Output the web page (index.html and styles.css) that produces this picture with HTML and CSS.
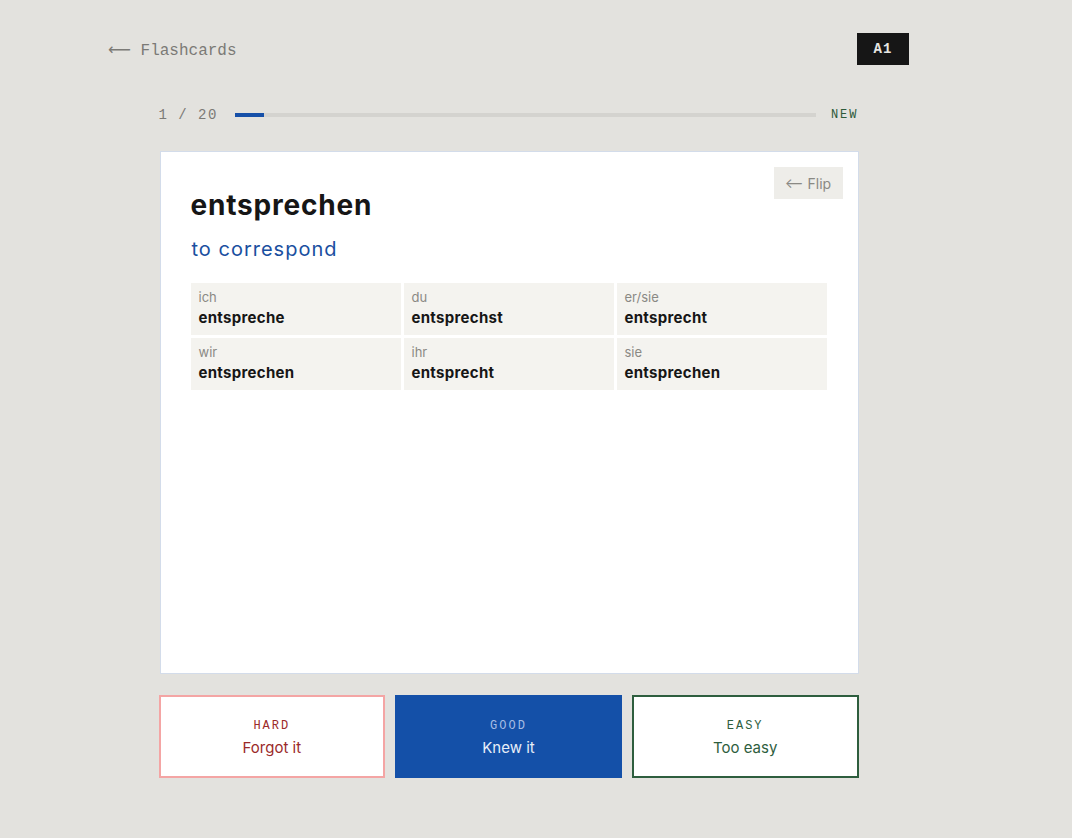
FILE: index.html
```html
<!DOCTYPE html>
<html lang="en">
<head>
    <meta charset="UTF-8">
    <meta name="viewport" content="width=device-width, initial-scale=1.0">
    <title>Flashcards</title>
    <link rel="stylesheet" href="styles.css">
</head>
<body>
    <div class="page">
        <header class="topbar">
            <a class="back" href="#"><span class="back-arrow">&#10229;</span> Flashcards</a>
            <span class="level">A1</span>
        </header>

        <main class="session">
            <div class="progress">
                <span class="count">1 / 20</span>
                <div class="track"><div class="fill" style="width: 5%;"></div></div>
                <span class="state">NEW</span>
            </div>

            <div class="card">
                <button class="flip">&#10229; Flip</button>
                <h1 class="word">entsprechen</h1>
                <p class="meaning">to correspond</p>

                <div class="conj">
                    <div class="cell"><span class="pron">ich</span><span class="form">entspreche</span></div>
                    <div class="cell"><span class="pron">du</span><span class="form">entsprechst</span></div>
                    <div class="cell"><span class="pron">er/sie</span><span class="form">entsprecht</span></div>
                    <div class="cell"><span class="pron">wir</span><span class="form">entsprechen</span></div>
                    <div class="cell"><span class="pron">ihr</span><span class="form">entsprecht</span></div>
                    <div class="cell"><span class="pron">sie</span><span class="form">entsprechen</span></div>
                </div>
            </div>

            <div class="grades">
                <button class="grade hard"><span class="tag">HARD</span><span class="desc">Forgot it</span></button>
                <button class="grade good"><span class="tag">GOOD</span><span class="desc">Knew it</span></button>
                <button class="grade easy"><span class="tag">EASY</span><span class="desc">Too easy</span></button>
            </div>
        </main>
    </div>
</body>
</html>
```

FILE: styles.css
```css
body {
    margin: 0;
    background-color: #e3e2de;
    font-family: Inter, "Noto Sans", sans-serif;
    color: #161616;
}
.page {
    width: 801px;
    margin-left: 108px;
    padding-top: 33px;
}
.topbar {
    display: flex;
    justify-content: space-between;
    align-items: center;
    height: 32px;
}
.back {
    font-family: "Liberation Mono", "DejaVu Sans Mono", monospace;
    font-size: 16px;
    color: #7b7a76;
    text-decoration: none;
    padding-top: 2px;
}
.back-arrow {
    font-family: "DejaVu Sans", sans-serif;
    font-size: 16px;
}
.level {
    display: flex;
    align-items: center;
    justify-content: center;
    width: 52px;
    height: 32px;
    background: #161616;
    color: #e6e6e2;
    font-family: "Liberation Mono", monospace;
    font-weight: bold;
    font-size: 14px;
    letter-spacing: 1px;
}
.session {
    width: 700px;
    margin: 0 auto;
    padding-top: 40px;
}
.progress {
    display: flex;
    align-items: center;
    height: 20px;
    font-family: "Liberation Mono", monospace;
}
.count {
    font-size: 14px;
    letter-spacing: 1.5px;
    color: #7b7a76;
    width: 76px;
}
.track {
    flex: 1;
    height: 4px;
    background: #d4d3cf;
}
.fill {
    height: 100%;
    background: #1650a8;
}
.state {
    margin-left: 15px;
    font-size: 12px;
    letter-spacing: 2px;
    color: #2d5a3a;
}
.card {
    position: relative;
    margin-top: 26px;
    margin-left: 1px;
    width: 699px;
    height: 523px;
    background: #fff;
    border: 1px solid #d3dcea;
    padding: 30px 30px 0 30px;
    box-sizing: border-box;
}
.flip {
    position: absolute;
    top: 15px;
    right: 15px;
    width: 69px;
    height: 32px;
    border: none;
    background: #eeede9;
    color: #8a8984;
    font-family: Inter, sans-serif;
    font-size: 14px;
    padding: 0;
    cursor: pointer;
}
.word {
    margin: 6px 0 0 0;
    font-size: 28px;
    font-weight: 700;
    line-height: 34px;
    letter-spacing: 0.8px;
    color: #161616;
}
.meaning {
    margin: 14px 0 0 1px;
    font-size: 20px;
    line-height: 26px;
    letter-spacing: 1px;
    color: #1a4fa0;
}
.conj {
    display: grid;
    grid-template-columns: repeat(3, 210px);
    gap: 3px;
    margin-top: 21px;
}
.cell {
    display: flex;
    flex-direction: column;
    background: #f4f3ef;
    height: 52px;
    padding: 6px 8px 0 8px;
    box-sizing: border-box;
}
.pron {
    font-size: 13px;
    line-height: 16px;
    color: #8a8984;
}
.form {
    margin-top: 3px;
    font-size: 15px;
    font-weight: 700;
    line-height: 20px;
    letter-spacing: 0.3px;
    color: #161616;
}
.grades {
    display: flex;
    gap: 10px;
    margin-top: 21px;
}
.grade {
    flex: 1;
    height: 83px;
    display: flex;
    flex-direction: column;
    align-items: center;
    justify-content: center;
    gap: 5px;
    border: 2px solid;
    background: #fff;
    cursor: pointer;
    padding: 2px 0 0 0;
}
.tag {
    font-family: "Liberation Mono", monospace;
    font-size: 12px;
    letter-spacing: 2px;
}
.desc {
    font-family: Inter, sans-serif;
    font-size: 15px;
}
.hard {
    border-color: #f4a5a4;
    color: #9b2a2a;
}
.good {
    border-color: #1450a8;
    background: #1450a8;
    color: #e8eef8;
}
.good .tag {
    color: #a6bde4;
}
.easy {
    border-color: #2e5e3e;
    color: #2e5e3e;
}
```
